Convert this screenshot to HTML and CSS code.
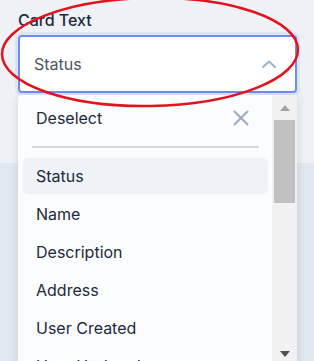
FILE: index.html
```html
<!DOCTYPE html>
<html lang="en">
<head>
  <meta charset="UTF-8" />
  <meta name="viewport" content="width=device-width, initial-scale=1.0" />
  <title>Card Text</title>
  <link rel="stylesheet" href="styles.css">
</head>
<body>
  <div class="top">
    <div class="field">
      <div class="field-label">Card Text</div>
      <div class="select">
        <span class="select-value">Status</span>
        <svg class="chevron" width="14" height="8" viewBox="0 0 14 8"><path d="M1 7 L7 1.5 L13 7" fill="none" stroke="#9fb0c7" stroke-width="2" stroke-linecap="round" stroke-linejoin="round"/></svg>
      </div>

      <!-- open dropdown -->
      <div class="menu">
        <div class="menu-list">
          <div class="menu-item deselect">
            <span>Deselect</span>
            <svg width="16" height="16" viewBox="0 0 16 16"><path d="M1.5 1.5 L14.5 14.5 M14.5 1.5 L1.5 14.5" stroke="#9aaac0" stroke-width="2" stroke-linecap="round"/></svg>
          </div>
          <div class="menu-divider"></div>
          <div class="menu-item active">Status</div>
          <div class="menu-item">Name</div>
          <div class="menu-item">Description</div>
          <div class="menu-item">Address</div>
          <div class="menu-item">User Created</div>
          <div class="menu-item">User Updated</div>
        </div>
        <div class="scrollbar">
          <div class="sb-btn"><span class="arrow-up"></span></div>
          <div class="sb-thumb"></div>
          <div class="sb-track"></div>
          <div class="sb-btn"><span class="arrow-down"></span></div>
        </div>
      </div>
    </div>
  </div>
  <div class="content"></div>

  <svg class="annotation" width="314" height="361" viewBox="0 0 314 361">
    <ellipse cx="150" cy="52" rx="148" ry="54" transform="rotate(-1 150 52)" fill="none" stroke="#e3131d" stroke-width="2.5"/>
  </svg>
</body>
</html>
```

FILE: styles.css
```css
:root {
  --bg-top: #eef1f6;
  --bg-bottom: #e2e8f0;
  --text: #1e293b;
  --muted: #4b5563;
  --accent: #6b8ef3;
  --menu-bg: #fbfcfe;
  --hover: #eff2f7;
  --divider: #d3dae4;
}

html, body { margin: 0; height: 100%; }
body {
  font-family: Inter, "Liberation Sans", sans-serif;
  font-size: 16px;
  color: var(--text);
  background: var(--bg-bottom);
  overflow: hidden;
}

.top { height: 163px; background: var(--bg-top); padding: 10px 17px 0 18px; box-sizing: border-box; }
.field { position: relative; width: 279px; }
.field-label { font-weight: 500; line-height: 20px; margin-bottom: 5px; }

.select {
  height: 58px;
  box-sizing: border-box;
  border: 2px solid var(--accent);
  border-radius: 4px;
  background: #fff;
  box-shadow: 0 0 0 3px rgba(107, 142, 243, .12);
  display: flex;
  align-items: center;
  justify-content: space-between;
  padding: 0 19px 0 14px;
}
.select-value { color: var(--muted); }
.chevron { display: block; }

/* dropdown */
.menu {
  position: absolute;
  left: 0;
  top: calc(100% + 2px);
  width: 279px;
  height: 271px;
  background: var(--menu-bg);
  border-radius: 3px;
  box-shadow: 0 2px 10px rgba(30, 41, 59, .14);
  display: flex;
  overflow: hidden;
  z-index: 2;
}
.menu-list { flex: 1; padding: 4px 4px 0 5px; overflow: hidden; }
.menu-item {
  height: 36px;
  line-height: 36px;
  margin-bottom: 2px;
  padding: 0 13px;
  border-radius: 5px;
  white-space: nowrap;
}
.menu-item.active { background: var(--hover); }
.deselect {
  height: 38px;
  margin: 0;
  display: flex;
  align-items: center;
  justify-content: space-between;
  padding: 0 19px 0 13px;
}
.deselect svg { display: block; }
.menu-divider { height: 2px; background: var(--divider); margin: 9px 9px 10px; }

/* fake scrollbar */
.scrollbar { width: 25px; background: #f1f1f1; display: flex; flex-direction: column; }
.sb-btn { height: 25px; display: flex; align-items: center; justify-content: center; }
.sb-thumb { height: 83px; margin: 0 2px; background: #c1c1c1; }
.sb-track { flex: 1; }
.arrow-up, .arrow-down { width: 0; height: 0; border-left: 5.5px solid transparent; border-right: 5.5px solid transparent; }
.arrow-up { border-bottom: 6px solid #a3a3a3; }
.arrow-down { border-top: 6px solid #505050; }

.content { height: calc(100% - 163px); }

.annotation { position: absolute; left: 0; top: 0; pointer-events: none; z-index: 5; }
```
